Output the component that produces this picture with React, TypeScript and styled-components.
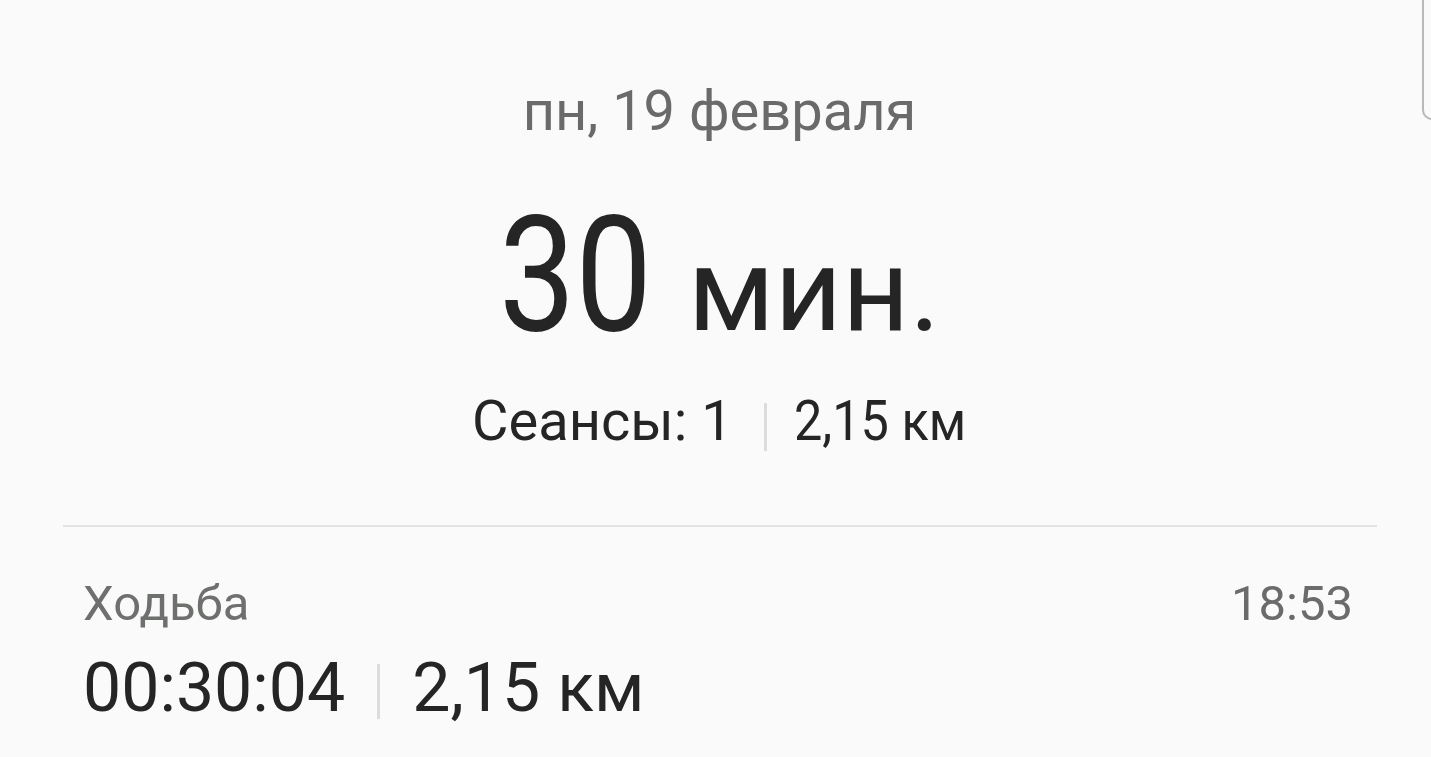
import React from "react";
import styled, { createGlobalStyle } from "styled-components";

const Global = createGlobalStyle`
  html, body { margin: 0; padding: 0; background: #fafafa; }
  body { font-family: Roboto, "Noto Sans", sans-serif; -webkit-font-smoothing: antialiased; }
`;

const Page = styled.div`
  position: relative;
  width: 1431px;
  height: 757px;
  overflow: hidden;
  background: #fafafa;
`;

const EdgeHandle = styled.div`
  position: absolute;
  top: -4px;
  right: -2px;
  width: 9px;
  height: 122px;
  border-left: 2px solid #b9b9b9;
  border-bottom: 2px solid #b9b9b9;
  border-bottom-left-radius: 10px;
`;

const Summary = styled.section`
  display: flex;
  flex-direction: column;
  align-items: center;
  padding: 77px 0 0 8px;
`;

const DateLine = styled.div`
  font-size: 56px;
  line-height: 68px;
  color: #6a6a6a;
`;

const TotalRow = styled.div`
  display: flex;
  align-items: baseline;
  margin-top: 45px;
  color: #252525;
`;

const TotalNumber = styled.span`
  display: inline-block;
  font-size: 162px;
  line-height: 170px;
  transform: scaleX(0.84);
  transform-origin: left center;
  margin-right: -26px;
`;

const TotalUnit = styled.span`
  font-size: 117px;
  line-height: 1;
  margin-left: 33px;
`;

const StatsLine = styled.div`
  margin-top: 29px;
  font-size: 56px;
  line-height: 64px;
  color: #252525;
  white-space: nowrap;
`;

const Narrow = styled.span`
  display: inline-block;
  transform: scaleX(0.9);
  transform-origin: left center;
  margin-right: -18px;
`;

const Sep = styled.span<{ $h: number; $drop: number; $left: number; $right: number }>`
  display: inline-block;
  width: 3px;
  height: ${(p) => p.$h}px;
  background: #dcdcdc;
  vertical-align: -${(p) => p.$drop}px;
  margin: 0 ${(p) => p.$right}px 0 ${(p) => p.$left}px;
`;

const Rule = styled.hr`
  border: none;
  height: 2px;
  background: #e3e3e3;
  margin: 72px 54px 0 63px;
`;

const Session = styled.section`
  padding: 0 78px 0 83px;
`;

const SessionHead = styled.div`
  display: flex;
  justify-content: space-between;
  align-items: baseline;
  margin-top: 47px;
  font-size: 49px;
  line-height: 60px;
`;

const ActivityName = styled.span`
  color: #6d706d;
`;

const StartTime = styled.span`
  color: #6b6b6b;
`;

const SessionStats = styled.div`
  margin-top: 14px;
  font-size: 68px;
  line-height: 80px;
  color: #252525;
  white-space: nowrap;
`;

export default function App() {
  return (
    <>
      <Global />
      <Page>
        <EdgeHandle />
        <Summary>
          <DateLine>пн, 19 февраля</DateLine>
          <TotalRow>
            <TotalNumber>30</TotalNumber>
            <TotalUnit>мин.</TotalUnit>
          </TotalRow>
          <StatsLine>
            Сеансы: 1<Sep $h={48} $drop={11} $left={31} $right={27} />
            <Narrow>2,15 км</Narrow>
          </StatsLine>
        </Summary>
        <Rule />
        <Session>
          <SessionHead>
            <ActivityName>Ходьба</ActivityName>
            <StartTime>18:53</StartTime>
          </SessionHead>
          <SessionStats>
            00:30:04<Sep $h={55} $drop={8} $left={32} $right={32} />2,15 км
          </SessionStats>
        </Session>
      </Page>
    </>
  );
}
